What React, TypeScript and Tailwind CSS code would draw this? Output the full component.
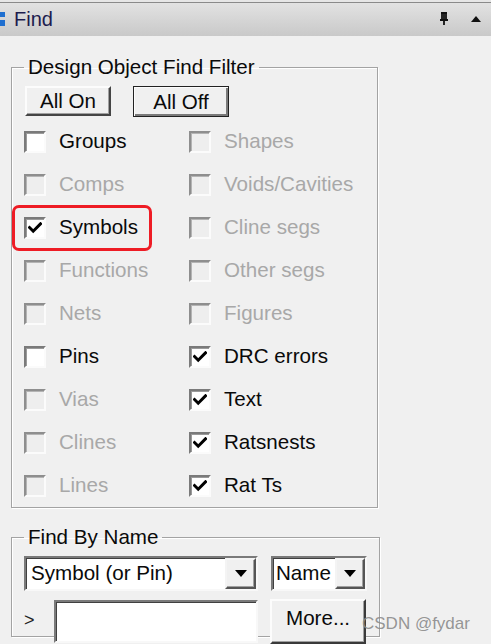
import React from "react";

const FONT = { fontFamily: '"Liberation Sans", Arial, sans-serif' };

function CheckMark() {
  return (
    <svg width="14" height="12" viewBox="0 0 14 12">
      <path d="M1.5 5.5 L5.2 9.2 L12.5 1.8" fill="none" stroke="#000" strokeWidth="3" strokeLinecap="square" />
    </svg>
  );
}

function Box({ checked, disabled }: { checked?: boolean; disabled?: boolean }) {
  return (
    <div
      className={
        disabled
          ? "w-[22px] h-[22px] flex items-center justify-center border-2 border-t-[#8e8e8e] border-l-[#8e8e8e] border-r-[#fbfbfb] border-b-[#fbfbfb] bg-[#eeeeee] shadow-[inset_1px_1px_0_#b4b4b4]"
          : "w-[22px] h-[22px] flex items-center justify-center border-2 border-t-[#7a7a7a] border-l-[#7a7a7a] border-r-[#fbfbfb] border-b-[#fbfbfb] bg-white shadow-[inset_1px_1px_0_#9a9a9a]"
      }
    >
      {checked ? <CheckMark /> : null}
    </div>
  );
}

function Item({ label, checked, disabled, highlight }: { label: string; checked?: boolean; disabled?: boolean; highlight?: boolean }) {
  return (
    <div className="relative h-[43px] flex items-center">
      <Box checked={checked} disabled={disabled} />
      <span className={disabled ? "ml-[13px] text-[20.6px] text-[#a8a8a8]" : "ml-[13px] text-[20.6px] text-[#0a0a0a]"}>{label}</span>
      {highlight ? (
        <div className="absolute left-[-12px] top-[-1px] w-[140px] h-[46px] border-[3px] border-[#ee1c25] rounded-[7px]" />
      ) : null}
    </div>
  );
}

function Arrow() {
  return (
    <svg width="12" height="7" viewBox="0 0 12 7">
      <path d="M0 0 L12 0 L6 7 Z" fill="#000" />
    </svg>
  );
}

function DropBtn({ w }: { w: string }) {
  return (
    <div className={w + " h-full flex items-center justify-center bg-[#f0f0f0] border-2 border-t-[#f4f4f4] border-l-[#f4f4f4] border-r-[#555555] border-b-[#555555] shadow-[inset_-1px_-1px_0_#a0a0a0]"}>
      <Arrow />
    </div>
  );
}

export default function App() {
  const rows: [string, boolean, boolean, string, boolean, boolean][] = [
    ["Groups", false, false, "Shapes", false, true],
    ["Comps", false, true, "Voids/Cavities", false, true],
    ["Symbols", true, false, "Cline segs", false, true],
    ["Functions", false, true, "Other segs", false, true],
    ["Nets", false, true, "Figures", false, true],
    ["Pins", false, false, "DRC errors", true, false],
    ["Vias", false, true, "Text", true, false],
    ["Clines", false, true, "Ratsnests", true, false],
    ["Lines", false, true, "Rat Ts", true, false],
  ];
  return (
    <div className="relative w-[491px] h-[644px] overflow-hidden bg-[#f0f0f0]" style={FONT}>
      {/* Title bar */}
      <div className="h-[36px] border-t-2 border-t-[#e6e6e6] flex items-center relative">
        <div className="absolute inset-x-0 top-0 h-[1px] bg-[#8a8a8a]" />
        <div className="absolute inset-x-0 top-[1px] bottom-0 bg-gradient-to-b from-[#e2e2e2] to-[#c9c9c9]" />
        <div className="relative flex items-center w-full">
          <div className="flex flex-col gap-[3px] mr-[9px]">
            <div className="w-[5px] h-[5px] bg-[#1f6fd0]" />
            <div className="w-[5px] h-[6px] bg-[#1f6fd0]" />
          </div>
          <span className="text-[20px] text-[#1c1c4e] leading-[24px]">Find</span>
          <div className="ml-auto flex items-center gap-[22px] mr-[10px]">
            <svg width="10" height="14" viewBox="0 0 10 14">
              <path d="M2 1 H8 M3 1 V8 M7 1 V8 M5 1 V8 M1 8 H9 M5 8 V13" stroke="#111" strokeWidth="1.8" fill="none" />
            </svg>
            <svg width="10" height="6" viewBox="0 0 10 6">
              <path d="M0 6 L5 0 L10 6 Z" fill="#111" />
            </svg>
          </div>
        </div>
      </div>

      {/* Design Object Find Filter */}
      <fieldset className="ml-[11px] mt-[19px] w-[367px] border border-[#a3a3a3] shadow-[1px_1px_0_#ffffff,inset_1px_1px_0_#ffffff] px-[12px] pt-[7px] pb-0">
        <legend className="px-[4px] text-[20.6px] leading-[24px] text-[#0a0a0a]">Design Object Find Filter</legend>
        <div className="flex items-start h-[34px]">
          <button className="w-[86px] h-[30px] ml-[1px] text-[20.6px] leading-[24px] text-[#0a0a0a] bg-[#f0f0f0] border-2 border-t-[#fcfcfc] border-l-[#fcfcfc] border-r-[#454545] border-b-[#454545] shadow-[inset_-1px_-1px_0_#a0a0a0]">
            All On
          </button>
          <button className="w-[96px] h-[31px] ml-[22px] text-[20.6px] leading-[24px] text-[#0a0a0a] bg-[#f0f0f0] border border-[#222222] shadow-[inset_1px_1px_0_#fcfcfc,inset_-2px_-2px_0_#7a7a7a]">
            All Off
          </button>
        </div>
        <div className="grid grid-cols-[165px_1fr]">
          {rows.map((r) => (
            <React.Fragment key={r[0]}>
              <Item label={r[0]} checked={r[1]} disabled={r[2]} highlight={r[0] === "Symbols"} />
              <Item label={r[3]} checked={r[4]} disabled={r[5]} />
            </React.Fragment>
          ))}
        </div>
      </fieldset>

      {/* Find By Name */}
      <fieldset className="ml-[11px] mt-[17px] w-[367px] h-[112px] border border-[#a3a3a3] shadow-[1px_1px_0_#ffffff,inset_1px_1px_0_#ffffff] px-[12px] pt-[7px] pb-0">
        <legend className="px-[4px] text-[20.6px] leading-[24px] text-[#0a0a0a]">Find By Name</legend>
        <div className="flex items-center h-[35px]">
          <div className="w-[234px] h-[35px] flex items-center bg-white border-2 border-t-[#7a7a7a] border-l-[#7a7a7a] border-r-[#f8f8f8] border-b-[#f8f8f8] shadow-[inset_1px_1px_0_#404040]">
            <span className="ml-[5px] text-[20.6px] text-[#0a0a0a] flex-1">Symbol (or Pin)</span>
            <DropBtn w="w-[31px]" />
          </div>
          <div className="ml-[13px] w-[96px] h-[35px] flex items-center bg-white border-2 border-t-[#7a7a7a] border-l-[#7a7a7a] border-r-[#f8f8f8] border-b-[#f8f8f8] shadow-[inset_1px_1px_0_#404040]">
            <span className="ml-[3px] text-[20.6px] text-[#0a0a0a] flex-1">Name</span>
            <DropBtn w="w-[30px]" />
          </div>
        </div>
        <div className="flex items-start mt-[9px] h-[43px]">
          <span className="w-[30px] text-[18px] leading-[40px] text-[#222222]">&gt;</span>
          <div className="w-[204px] h-[43px] bg-white border-2 border-t-[#7a7a7a] border-l-[#7a7a7a] border-r-[#f8f8f8] border-b-[#f8f8f8] shadow-[inset_1px_1px_0_#404040]" />
          <button className="ml-[12px] mt-[-1px] w-[96px] h-[45px] text-[20.6px] text-[#0a0a0a] bg-[#f0f0f0] border-2 border-t-[#fcfcfc] border-l-[#fcfcfc] border-r-[#3a3a3a] border-b-[#3a3a3a] shadow-[inset_-1px_-1px_0_#a0a0a0] text-left pl-[14px] pb-[6px]">
            More...
          </button>
        </div>
      </fieldset>

      <div className="absolute left-[362px] top-[612px] text-[17px] leading-[24px] text-[#8a8a8a]/90">CSDN @fydar</div>
    </div>
  );
}
